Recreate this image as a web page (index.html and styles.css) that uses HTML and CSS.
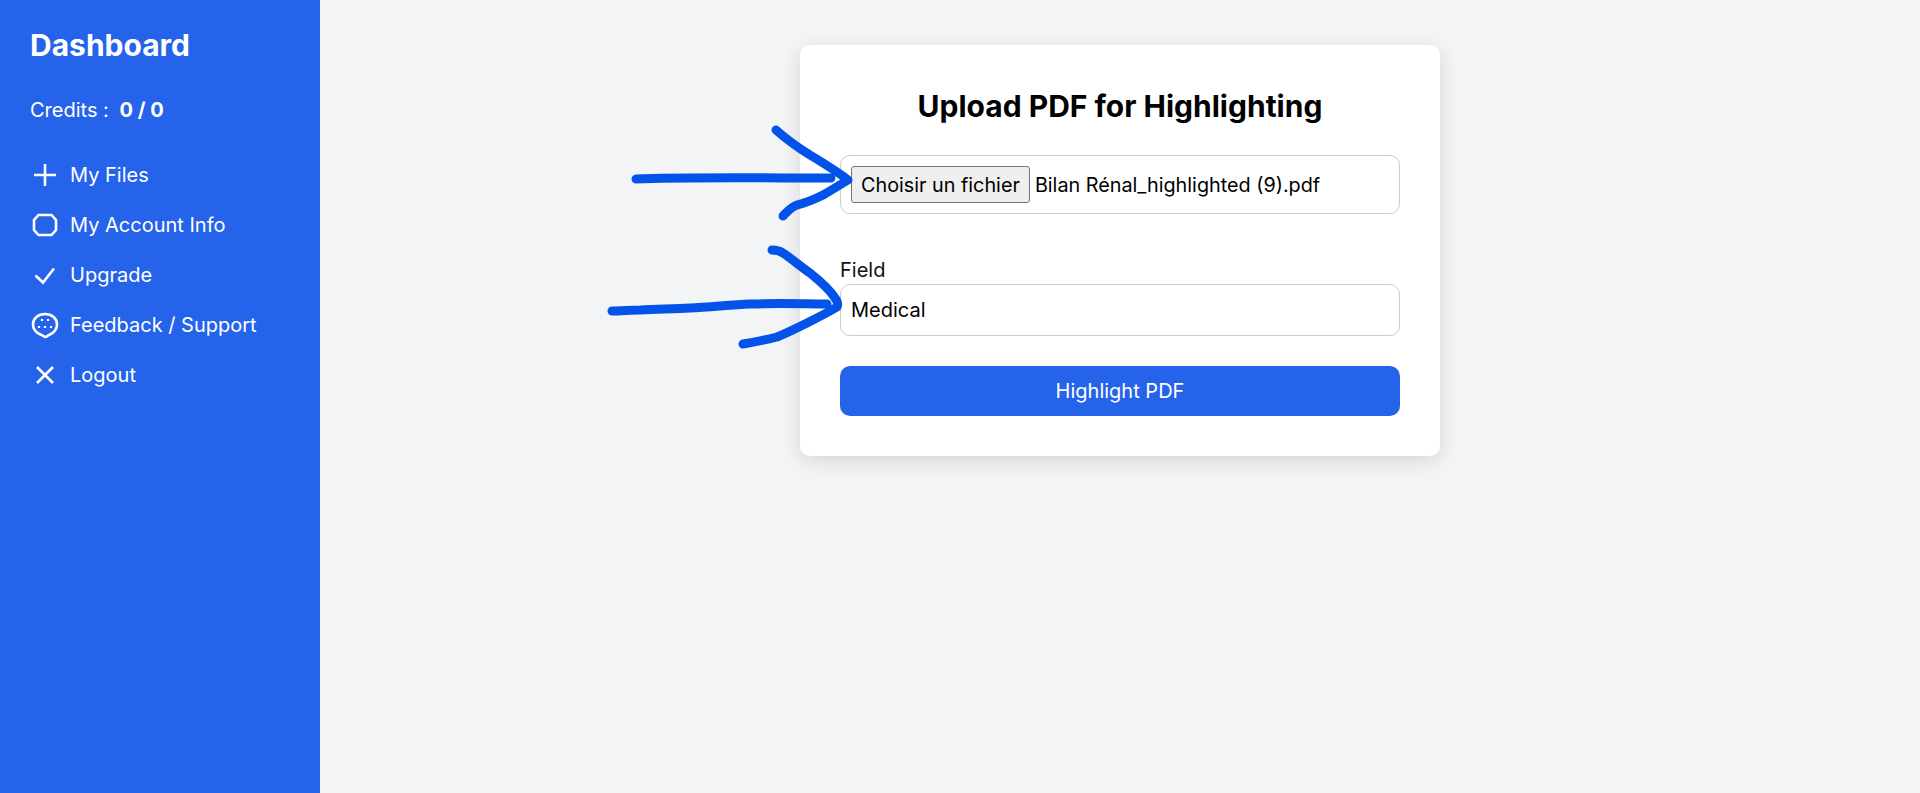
FILE: index.html
```html
<!DOCTYPE html>
<html lang="en">
<head>
<meta charset="utf-8">
<title>Dashboard</title>
<link rel="stylesheet" href="styles.css">
</head>
<body>
<div class="layout">
  <aside class="sidebar">
    <h1 class="brand">Dashboard</h1>
    <p class="credits">Credits : <strong class="credits-value">0 / 0</strong></p>
    <nav class="nav">
      <a class="nav-item" href="#"><svg class="nav-icon" viewBox="0 0 30 30"><path d="M4 15H26M15 4V26"/></svg>My Files</a>
      <a class="nav-item" href="#"><svg class="nav-icon" viewBox="0 0 30 30"><path d="M8.5 5H21.5L26 10V20L21.5 25H8.5L4 20V10Z"/></svg>My Account Info</a>
      <a class="nav-item" href="#"><svg class="nav-icon" viewBox="0 0 30 30"><path d="M5.5 15.5L13 22.5L24 8.5"/></svg>Upgrade</a>
      <a class="nav-item" href="#"><svg class="nav-icon" viewBox="0 0 30 30"><path d="M15 4C22 4 27 8.5 27 14.5C27 19.5 24 22.5 20 24.5C17.5 25.5 16.5 27 15.5 27C14.5 27 13 25.5 10.5 24.5C6 22.5 3 19.5 3 14.5C3 8.5 8 4 15 4Z"/><path class="nav-dots" d="M12 10h.01M18 10h.01M9 17h.01M15 17h.01M21 17h.01"/></svg>Feedback / Support</a>
      <a class="nav-item" href="#"><svg class="nav-icon" viewBox="0 0 30 30"><path d="M7 7L23 23M23 7L7 23"/></svg>Logout</a>
    </nav>
  </aside>
  <main class="main">
    <section class="card">
      <h2 class="card-title">Upload PDF for Highlighting</h2>
      <div class="file-box">
        <button class="file-button" type="button">Choisir un fichier</button>
        <span class="file-name">Bilan Rénal_highlighted (9).pdf</span>
      </div>
      <label class="field-label" for="field">Field</label>
      <input class="field-input" id="field" type="text" value="Medical">
      <button class="submit" type="button">Highlight PDF</button>
    </section>
  </main>
</div>
<svg class="annotation" viewBox="0 0 1920 793" aria-hidden="true">
  <path d="M636 179C680 177 770 178 831 178"/>
  <path d="M776 130C785 138 797 147 810 155C825 164 838 172 848 180C838 186 830 191 823 195C813 200 805 203 797 205C791 207 787 212 783 216"/>
  <path d="M612 311C622 311 630 310 640 310C660 309 675 309 690 308C710 307 730 305 750 304C780 303 805 304 827 304"/>
  <path d="M772 250C776 250 780 251 783 253C792 259 800 266 810 273C820 281 830 290 835 298C838 302 838 305 837 307C827 313 817 318 807 323C797 328 787 333 777 337C765 340 755 342 743 344"/>
</svg>
</body>
</html>
```
FILE: styles.css
```css
* {
  box-sizing: border-box;
}

html,
body {
  margin: 0;
  height: 100%;
}

body {
  font-family: Inter, "Liberation Sans", sans-serif;
  background: #f3f4f6;
  overflow: hidden;
}

.layout {
  display: flex;
  height: 793px;
}

.sidebar {
  width: 320px;
  flex: none;
  background: #2563eb;
  color: #fff;
  padding: 24px 30px;
}

.brand {
  margin: 0;
  font-size: 30px;
  line-height: 42px;
  font-weight: 700;
}

.credits {
  margin: 30px 0 0;
  font-size: 20px;
  line-height: 28px;
}

.credits-value {
  font-weight: 700;
  margin-left: 5px;
}

.nav {
  display: flex;
  flex-direction: column;
  margin-top: 26px;
}

.nav-item {
  display: flex;
  align-items: center;
  gap: 10px;
  height: 50px;
  color: #fff;
  text-decoration: none;
  font-size: 20px;
}

.nav-icon {
  width: 30px;
  height: 30px;
  flex: none;
  fill: none;
  stroke: #fff;
  stroke-width: 2.6;
}

.nav-dots {
  stroke-linecap: square;
  stroke-width: 2.2;
}

.main {
  flex: 1;
  display: flex;
  justify-content: center;
  align-items: flex-start;
  padding-top: 45px;
}

.card {
  width: 640px;
  height: 411px;
  background: #fff;
  border-radius: 10px;
  padding: 40px;
  box-shadow: 0 5px 20px rgba(0, 0, 0, 0.12);
}

.card-title {
  margin: 0;
  font-size: 30px;
  line-height: 42px;
  font-weight: 700;
  text-align: center;
  color: #000;
}

.file-box {
  display: flex;
  align-items: center;
  height: 59px;
  margin-top: 28px;
  padding: 0 10px;
  border: 1px solid #ccc;
  border-radius: 10px;
  font-size: 19.8px;
  color: #000;
}

.file-button {
  height: 37px;
  padding: 0 9px;
  margin-right: 5px;
  font: inherit;
  color: #000;
  background: #efefef;
  border: 1px solid #767676;
  border-radius: 3px;
}

.field-label {
  display: block;
  margin-top: 43px;
  font-size: 20px;
  line-height: 26px;
  color: #111;
}

.field-input {
  display: block;
  width: 100%;
  height: 52px;
  margin-top: 1px;
  padding: 0 10px;
  border: 1px solid #ccc;
  border-radius: 10px;
  font: inherit;
  font-size: 20px;
  color: #000;
  background: #fff;
  outline: none;
}

.submit {
  display: block;
  width: 100%;
  height: 50px;
  margin-top: 30px;
  border: 0;
  border-radius: 10px;
  background: #2563eb;
  color: #fff;
  font: inherit;
  font-size: 20px;
}

.annotation {
  position: absolute;
  inset: 0;
  width: 1920px;
  height: 793px;
  fill: none;
  stroke: #0353e9;
  stroke-width: 9;
  stroke-linecap: round;
  stroke-linejoin: round;
  pointer-events: none;
}
```
